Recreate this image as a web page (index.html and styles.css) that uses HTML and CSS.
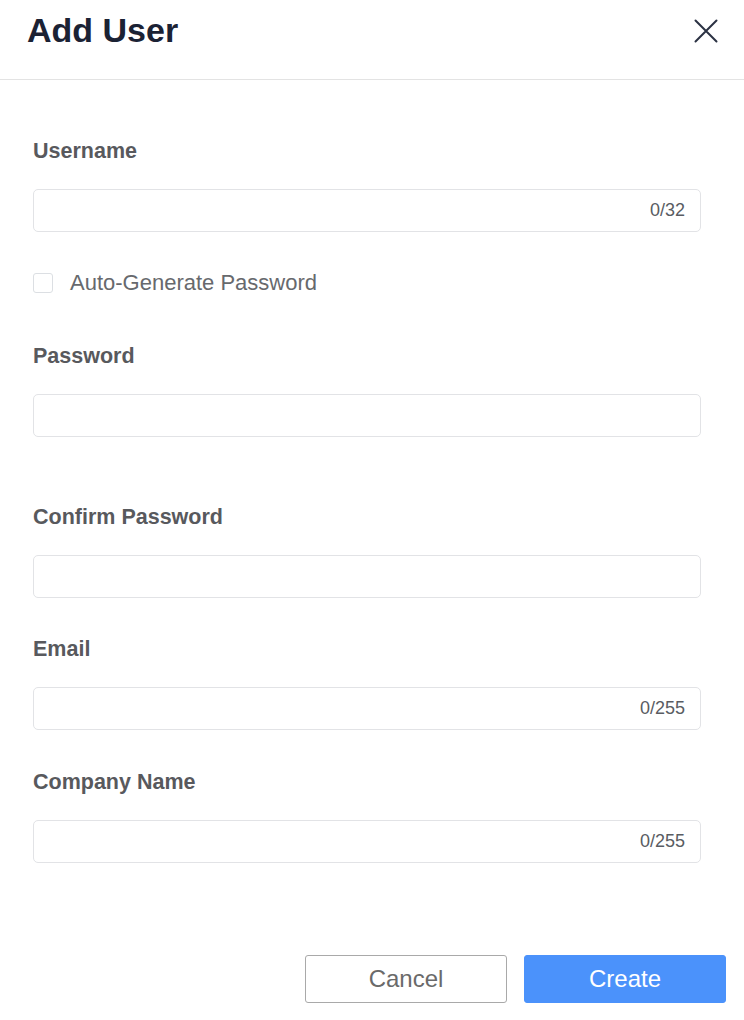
FILE: index.html
```html
<!DOCTYPE html>
<html lang="en">
<head>
<meta charset="utf-8">
<title>Add User</title>
<link rel="stylesheet" href="styles.css">
</head>
<body>
<div class="dialog">
  <header class="head">
    <h1 class="title">Add User</h1>
    <button class="close" type="button" aria-label="Close">
      <svg width="24" height="24" viewBox="0 0 24 24"><path d="M1.5 1.5 L22.5 22.5 M22.5 1.5 L1.5 22.5" stroke="#2b3243" stroke-width="2" fill="none" stroke-linecap="round"/></svg>
    </button>
  </header>
  <form class="body">
    <div class="field">
      <label class="label">Username</label>
      <div class="input"><input class="control" type="text"><span class="count">0/32</span></div>
    </div>
    <label class="check-row"><span class="check"></span><span class="check-text">Auto-Generate Password</span></label>
    <div class="field field-first field-hint">
      <label class="label">Password</label>
      <div class="input"><input class="control" type="password"></div>
    </div>
    <div class="field">
      <label class="label">Confirm Password</label>
      <div class="input"><input class="control" type="password"></div>
    </div>
    <div class="field">
      <label class="label">Email</label>
      <div class="input"><input class="control" type="text"><span class="count">0/255</span></div>
    </div>
    <div class="field">
      <label class="label">Company Name</label>
      <div class="input"><input class="control" type="text"><span class="count">0/255</span></div>
    </div>
  </form>
  <footer class="foot">
    <button class="btn btn-cancel" type="button">Cancel</button>
    <button class="btn btn-create" type="button">Create</button>
  </footer>
</div>
</body>
</html>
```
FILE: styles.css
```css
html, body {
  margin: 0;
  padding: 0;
  background: #ffffff;
}
body {
  font-family: "Liberation Sans", Arial, sans-serif;
}
.dialog {
  width: 744px;
  height: 1020px;
  background: #fff;
}
.head {
  height: 69px;
  box-sizing: content-box;
  padding: 10px 26px 0 27px;
  display: flex;
  justify-content: space-between;
  align-items: flex-start;
  border-bottom: 1px solid #e3e3e3;
}
.title {
  margin: 0;
  font-size: 34px;
  line-height: 40px;
  font-weight: 700;
  color: #1b2234;
}
.close {
  margin-top: 9px;
  padding: 0;
  border: 0;
  background: none;
  width: 24px;
  height: 24px;
  display: block;
}
.close svg { display: block; }
.body {
  padding: 58px 43px 0 33px;
  margin: 0;
}
.field {
  margin-top: 38.5px;
}
.field:first-child { margin-top: 0; }
.field-first { margin-top: 50px; }
.field-hint { padding-bottom: 28px; }
.label {
  display: block;
  font-size: 21.5px;
  line-height: 24px;
  padding-top: 1px;
  font-weight: 700;
  color: #58595d;
  margin-bottom: 26px;
}
.input {
  height: 43px;
  box-sizing: border-box;
  border: 1px solid #e2e3e6;
  border-radius: 5px;
  display: flex;
  align-items: center;
  padding: 0 15px 0 14px;
}
.control {
  flex: 1;
  border: 0;
  outline: none;
  background: transparent;
  font: inherit;
  font-size: 18px;
  min-width: 0;
  padding: 0;
}
.count {
  font-size: 18px;
  color: #595c62;
}
.check-row {
  margin-top: 41px;
  display: flex;
  align-items: center;
  height: 20px;
}
.check {
  width: 20px;
  height: 20px;
  box-sizing: border-box;
  border: 1px solid #dcdfe3;
  border-radius: 3px;
  margin-right: 17px;
}
.check-text {
  font-size: 22px;
  line-height: 20px;
  color: #67696d;
}
.foot {
  margin-top: 92px;
  display: flex;
  justify-content: flex-end;
  gap: 17px;
  padding-right: 18px;
}
.btn {
  width: 202px;
  height: 48px;
  box-sizing: border-box;
  border-radius: 3px;
  font-family: "Liberation Sans", Arial, sans-serif;
  font-size: 24px;
  padding: 0;
}
.btn-cancel {
  background: #fff;
  border: 1.5px solid #a9a9a9;
  color: #6a6a6a;
}
.btn-create {
  background: #4b92fb;
  border: 1px solid #4b92fb;
  color: #ffffff;
}
```
